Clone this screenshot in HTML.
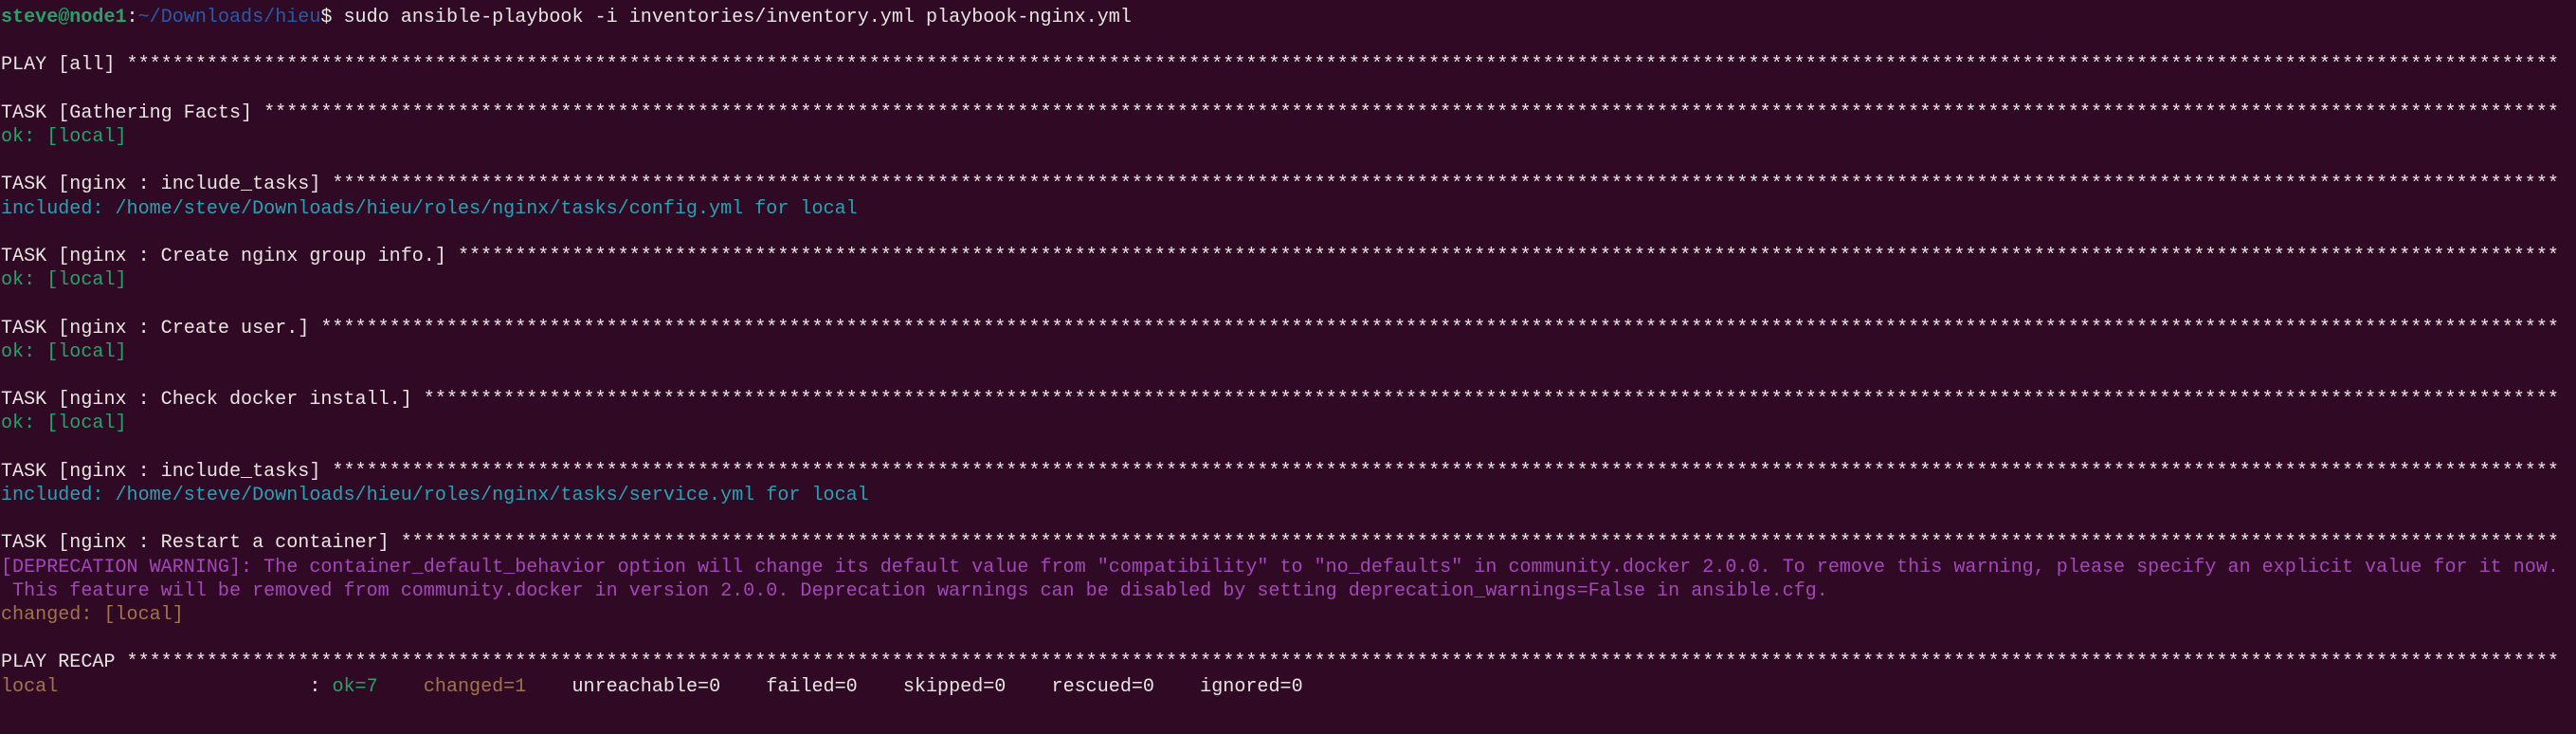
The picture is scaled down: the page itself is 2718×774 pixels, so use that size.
<!DOCTYPE html>
<html><head><meta charset="utf-8">
<style>
html,body{margin:0;padding:0;background:#300a24;width:2718px;height:774px;overflow:hidden}
pre{margin:0;padding:6px 0 0 1px;font-family:"Liberation Mono","DejaVu Sans Mono",monospace;font-size:20.08px;line-height:25.2px;color:#e8e6e3;white-space:pre}
.pg{color:#26a269;font-weight:bold}.pb{color:#2a5aa8}
.g{color:#26a269}.c{color:#2aa1b3}.y{color:#a2734c}.p{color:#a347ba}
</style></head><body>
<pre id="t"><span class="pg">steve@node1</span>:<span class="pb">~/Downloads/hieu</span>$ sudo ansible-playbook -i inventories/inventory.yml playbook-nginx.yml

<span class="s">PLAY [all] </span>

<span class="s">TASK [Gathering Facts] </span>
<span class="g">ok: [local]</span>

<span class="s">TASK [nginx : include_tasks] </span>
<span class="c">included: /home/steve/Downloads/hieu/roles/nginx/tasks/config.yml for local</span>

<span class="s">TASK [nginx : Create nginx group info.] </span>
<span class="g">ok: [local]</span>

<span class="s">TASK [nginx : Create user.] </span>
<span class="g">ok: [local]</span>

<span class="s">TASK [nginx : Check docker install.] </span>
<span class="g">ok: [local]</span>

<span class="s">TASK [nginx : include_tasks] </span>
<span class="c">included: /home/steve/Downloads/hieu/roles/nginx/tasks/service.yml for local</span>

<span class="s">TASK [nginx : Restart a container] </span>
<span class="p">[DEPRECATION WARNING]: The container_default_behavior option will change its default value from "compatibility" to "no_defaults" in community.docker 2.0.0. To remove this warning, please specify an explicit value for it now.</span>
<span class="p"> This feature will be removed from community.docker in version 2.0.0. Deprecation warnings can be disabled by setting deprecation_warnings=False in ansible.cfg.</span>
<span class="y">changed: [local]</span>

<span class="s">PLAY RECAP </span>
<span class="y">local</span>                      : <span class="g">ok=7   </span> <span class="y">changed=1   </span> unreachable=0    failed=0    skipped=0    rescued=0    ignored=0
</pre>
<script>
document.querySelectorAll('.s').forEach(function(e){var n=224-e.textContent.length;e.textContent+= '*'.repeat(n);});
</script>
</body></html>
